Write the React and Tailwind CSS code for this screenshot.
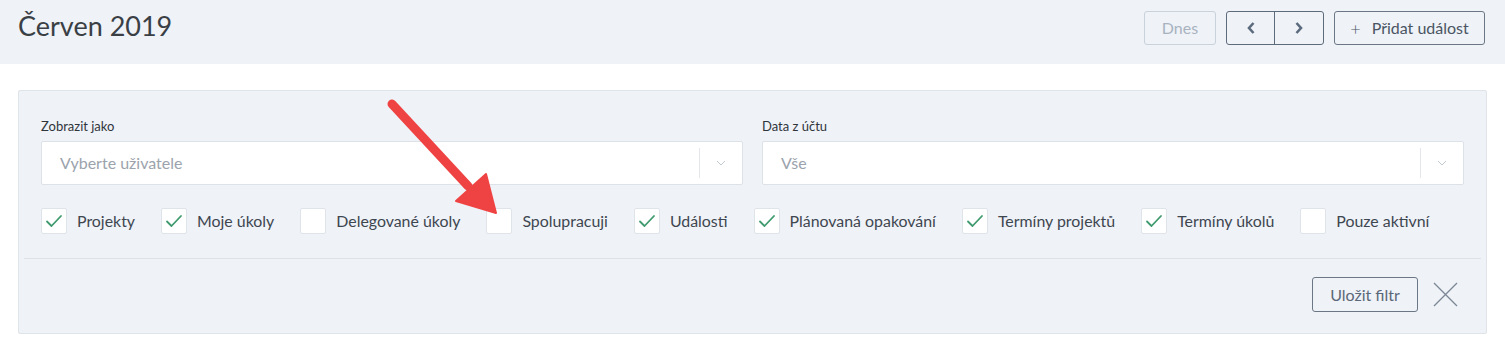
import React from "react";

const items = [
  ["Projekty", true],
  ["Moje úkoly", true],
  ["Delegované úkoly", false],
  ["Spolupracuji", false],
  ["Události", true],
  ["Plánovaná opakování", true],
  ["Termíny projektů", true],
  ["Termíny úkolů", true],
  ["Pouze aktivní", false],
];

function Check({ label, checked }) {
  return (
    <label className="flex items-center gap-[10px]">
      <span className="w-[26px] h-[26px] bg-white border border-[#dfe4ea] rounded-[2px] flex items-center justify-center">
        {checked && (
          <svg width="18" height="14" viewBox="0 0 18 14" fill="none">
            <path d="M2 7.5 L6.5 12 L16 2" stroke="#3f9a6e" strokeWidth="1.8" strokeLinecap="round" strokeLinejoin="round" />
          </svg>
        )}
      </span>
      <span className="text-[15.9px] leading-[20px] text-[#3e4650]">{label}</span>
    </label>
  );
}

function Select({ label, value }) {
  return (
    <div className="flex flex-col">
      <div className="text-[13px] text-[#2f353b] h-[17px] leading-[17px] mb-[6px]">{label}</div>
      <div className="h-[44px] bg-white border border-[#dde2e8] rounded-[2px] flex items-center">
        <div className="flex-1 pl-[18px] text-[16px] text-[#9ba3ad]">{value}</div>
        <div className="w-px h-[30px] bg-[#e3e7ec]" />
        <div className="w-[42px] flex items-center justify-center">
          <svg width="10" height="6" viewBox="0 0 10 6" fill="none">
            <path d="M1 1 L5 5 L9 1" stroke="#c3c9d0" strokeWidth="1" />
          </svg>
        </div>
      </div>
    </div>
  );
}

export default function App() {
  return (
    <div className="relative w-[1505px] h-[357px] bg-white" style={{ fontFamily: "Lato, 'Open Sans', sans-serif" }}>
      <div className="h-[64px] bg-[#eff2f7] flex items-center justify-between pl-[18px] pr-[20px]">
        <h1 className="text-[27px] text-[#3a3f45] leading-none -mt-[14px]">Červen 2019</h1>
        <div className="flex items-center gap-[10px] -mt-[8px]">
          <button className="w-[72px] h-[34px] border border-[#c9d1da] rounded-[3px] text-[16px] text-[#a8b3bf]">Dnes</button>
          <div className="flex h-[34px] border border-[#5e6b7a] rounded-[3px]">
            <button className="w-[48px] flex items-center justify-center border-r border-[#5e6b7a]">
              <svg width="10" height="14" viewBox="0 0 10 14"><path d="M7.5 2 L3 7 L7.5 12" stroke="#5b6b7d" strokeWidth="2.6" fill="none" strokeLinejoin="miter" /></svg>
            </button>
            <button className="w-[48px] flex items-center justify-center">
              <svg width="10" height="14" viewBox="0 0 10 14"><path d="M2.5 2 L7 7 L2.5 12" stroke="#5b6b7d" strokeWidth="2.6" fill="none" /></svg>
            </button>
          </div>
          <button className="w-[151px] h-[34px] border border-[#6b7785] rounded-[3px] text-[16px] text-[#4a5563] flex items-center justify-center gap-[11px]">
            <span className="text-[18px] font-light">+</span>
            <span>Přidat událost</span>
          </button>
        </div>
      </div>

      <div className="mx-[18px] mt-[26px] h-[244px] border border-[#dfe4ea] bg-[#eff2f7] rounded-[2px] flex flex-col">
        <div className="px-[22px] pt-[27px]">
          <div className="grid grid-cols-2 gap-[19px]">
            <Select label="Zobrazit jako" value="Vyberte uživatele" />
            <Select label="Data z účtu" value="Vše" />
          </div>
          <div className="flex items-center gap-[26px] mt-[23px]">
            {items.map(([l, c]) => (
              <Check key={l} label={l} checked={c} />
            ))}
          </div>
        </div>
        <div className="mx-[5px] mt-[24px] h-px bg-[#dde2e8]" />
        <div className="flex items-center justify-end pr-[28px] mt-[18px]">
          <button className="w-[106px] h-[35px] border border-[#6b7785] rounded-[3px] text-[16px] text-[#5b6878]">Uložit filtr</button>
          <svg className="ml-[15px]" width="25" height="25" viewBox="0 0 25 25">
            <path d="M1 1 L24 24 M24 1 L1 24" stroke="#7b8794" strokeWidth="1.3" />
          </svg>
        </div>
      </div>

      <svg className="absolute left-0 top-0 pointer-events-none" width="1505" height="357">
        <line x1="392" y1="104" x2="468" y2="186" stroke="#ef4343" strokeWidth="9" strokeLinecap="round" />
        <polygon points="456,201 486,174 496,213" fill="#ef4343" stroke="#ef4343" strokeWidth="2" strokeLinejoin="round" />
      </svg>
    </div>
  );
}
